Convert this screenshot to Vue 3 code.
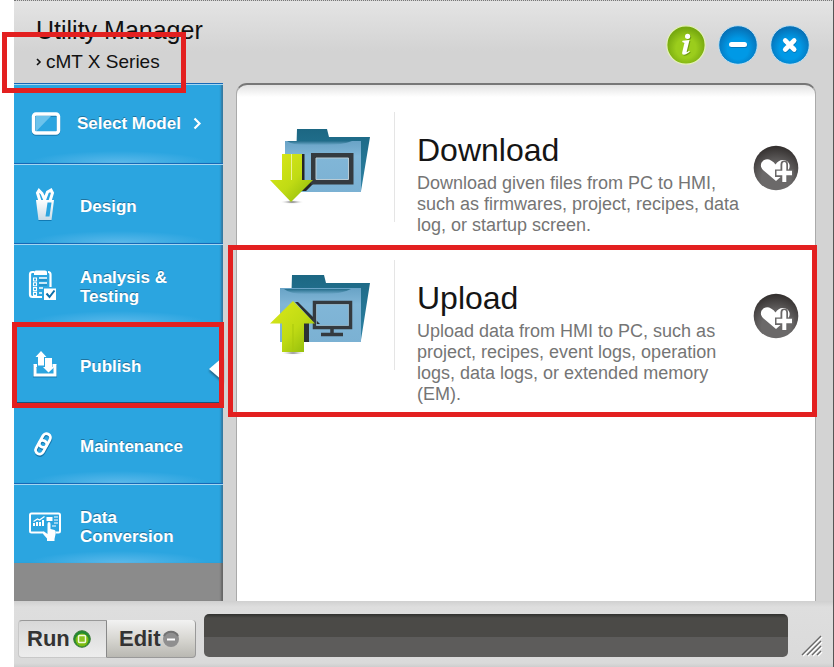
<script setup>
import { ref } from 'vue'

const active = ref('Publish')
const mode = ref('Run')

const items = [
  { label: 'Select Model', icon: 'model' },
  { label: 'Design', icon: 'design' },
  { label: 'Analysis & Testing', icon: 'analysis' },
  { label: 'Publish', icon: 'publish' },
  { label: 'Maintenance', icon: 'link' },
  { label: 'Data Conversion', icon: 'data' },
]

const cards = [
  {
    title: 'Download',
    text: 'Download given files from PC to HMI, such as firmwares, project, recipes, data log, or startup screen.',
  },
  {
    title: 'Upload',
    text: 'Upload data from HMI to PC, such as project, recipes, event logs, operation logs, data logs, or extended memory (EM).',
  },
]
</script>

<template>
  <div class="window">
    <header class="header">
      <div class="titles">
        <h1>Utility Manager</h1>
        <p class="series">
          <svg width="6" height="8" viewBox="0 0 6 8"><path d="M1 1l3 3-3 3" fill="none" stroke="#111" stroke-width="1.6" /></svg>
          <span>cMT X Series</span>
        </p>
        <span class="mark mark-series"></span>
      </div>
      <div class="controls">
        <button type="button" class="round" aria-label="Information">
          <svg width="40" height="40" viewBox="0 0 40 40">
            <defs>
              <radialGradient id="gGreen" cx=".5" cy=".58" r=".52">
                <stop offset=".5" stop-color="#9bcd1c" /><stop offset="1" stop-color="#76a80f" />
              </radialGradient>
            </defs>
            <circle cx="20" cy="20" r="19.2" fill="url(#gGreen)" stroke="#e4f2b8" stroke-width="1.2" />
            <g transform="translate(1 1)" fill="#56800a" opacity=".6">
              <circle cx="21.6" cy="11.3" r="2.6" />
              <path d="M16.500 15.800l7-.8-2.800 11.600c-.2 1 .6.8 2.600-.8l.5.8c-3 3.200-8.200 4.800-7.600 1l2.200-9.600-2.200-1z" />
            </g>
            <circle cx="21.6" cy="11.3" r="2.6" fill="#fff" />
            <path d="M16.500 15.800l7-.8-2.800 11.600c-.2 1 .6.8 2.600-.8l.5.8c-3 3.200-8.200 4.800-7.600 1l2.200-9.600-2.200-1z" fill="#fff" />
          </svg>
        </button>
        <button type="button" class="round" aria-label="Minimize">
          <svg width="40" height="40" viewBox="0 0 40 40">
            <defs>
              <radialGradient id="gBlue" cx=".5" cy=".6" r=".54">
                <stop offset=".5" stop-color="#0099e6" /><stop offset="1" stop-color="#0672b8" />
              </radialGradient>
            </defs>
            <circle cx="20" cy="20" r="19.3" fill="url(#gBlue)" stroke="#bfe0f2" stroke-width="1" />
            <rect x="11.5" y="18" width="18" height="5" rx="2.5" fill="#07558c" opacity=".5" />
            <rect x="11" y="17" width="18" height="5" rx="2.5" fill="#fff" />
          </svg>
        </button>
        <button type="button" class="round" aria-label="Close">
          <svg width="40" height="40" viewBox="0 0 40 40">
            <circle cx="20" cy="20" r="19.3" fill="url(#gBlue)" stroke="#bfe0f2" stroke-width="1" />
            <path d="M15.500 16.500l9 9m0-9l-9 9" stroke="#07558c" stroke-width="4.600" stroke-linecap="round" opacity=".5" />
            <path d="M15.200 15.500l9 9m0-9l-9 9" stroke="#fff" stroke-width="4.600" stroke-linecap="round" />
          </svg>
        </button>
      </div>
    </header>

    <div class="body">
      <nav class="sidebar">
        <button
          v-for="item in items"
          :key="item.label"
          type="button"
          class="nav-item"
          :class="{ active: active === item.label, first: item.icon === 'model' }"
          @click="active = item.label"
        >
          <span class="nav-icon">
            <svg v-if="item.icon === 'model'" width="30" height="26" viewBox="0 0 30 26">
              <rect x="2.5" y="4" width="25" height="19" rx="2.5" fill="#2ba5e0" stroke="#167ab0" stroke-width="3.5" />
              <path d="M5 20.500V5h15z" fill="#6cc3ec" />
              <rect x="2.5" y="3" width="25" height="19" rx="2.5" fill="none" stroke="#fff" stroke-width="3.5" />
            </svg>
            <svg v-else-if="item.icon === 'design'" width="30" height="36" viewBox="0 0 30 36">
              <defs><linearGradient id="cup" x1="0" y1="0" x2="0" y2="1"><stop offset="0" stop-color="#fff" /><stop offset="1" stop-color="#c9dbe6" /></linearGradient></defs>
              <path d="M10 14L7.500 6l1.500-2.500 3 3 3 7M14.500 13l3-8 3.500-2 1.500 3-2.500 8" fill="none" stroke="#fff" stroke-width="3" />
              <path d="M6 13h18l-2.500 20h-13z" fill="url(#cup)" />
              <path d="M17.500 15.500h4l-2 14h-4z" fill="#2ba5e0" />
              <path d="M8.500 33.500h13" stroke="#117ab4" />
            </svg>
            <svg v-else-if="item.icon === 'analysis'" class="shift" width="30" height="32" viewBox="0 0 30 32">
              <path d="M6 3H4.500Q2 3 2 5.500v20Q2 28 4.500 28H14M20 3q2.500 0 2.500 2.500V18" fill="none" stroke="#fff" stroke-width="2.200" />
              <path d="M6 6V3q0-1.500 2-1.500h9Q19 1.500 19 3v3z" fill="#fff" />
              <path d="M5.500 9h3v3h-3zM5.500 13.800h3v3h-3zM5.500 18.600h3v3h-3zM5.500 23.400h3v3h-3z" fill="none" stroke="#fff" stroke-width="1.100" />
              <path d="M11 9h8M11 14h8M11 19h4M11 24h3" stroke="#fff" stroke-width="1.300" />
              <path d="M11 11h8M11 16h8" stroke="#167ab0" stroke-width=".8" />
              <rect x="16" y="19.5" width="12" height="11.5" fill="#fff" />
              <path d="M18.500 24.500l3 3.500 5-6.500" fill="none" stroke="#0b6faa" stroke-width="2" />
            </svg>
            <svg v-else-if="item.icon === 'publish'" width="26" height="28" viewBox="0 0 26 28">
              <path d="M5 15.500H2.500V25h21v-9.500H21" fill="none" stroke="#157bb1" stroke-width="3" />
              <path d="M5 14.500H3v9.500h20v-9.500h-2.500" fill="none" stroke="#fff" stroke-width="3" />
              <path d="M9 0l5.500 6H12v8.500H6V6H3.500zM13 7h7v9h2.500L16.500 21.500 11 16h2z" fill="#fff" />
            </svg>
            <svg v-else-if="item.icon === 'link'" class="shift" width="26" height="28" viewBox="0 0 26 28">
              <g fill="none" transform="rotate(29 13 13)" stroke-width="2.8">
                <g stroke="#1477ad" transform="translate(1 1)">
                  <rect x="9" y="1.8" width="8" height="14.5" rx="4" />
                  <rect x="9" y="9.5" width="8" height="14.5" rx="4" />
                </g>
                <rect x="9" y="1.8" width="8" height="14.5" rx="4" stroke="#fff" />
                <rect x="9" y="9.5" width="8" height="14.5" rx="4" stroke="#fff" />
              </g>
            </svg>
            <svg v-else width="34" height="36" viewBox="0 -4 34 36">
              <path d="M16 21.500H3.500Q2 21.500 2 20V4q0-1.500 1.500-1.500h27Q32 2.500 32 4v16q0 1.500-1.500 1.500H28" fill="none" stroke="#fff" stroke-width="2" />
              <path d="M6 15v-3M9 15v-4M12 15v-4M15 15V9" stroke="#fff" stroke-width="2" />
              <path d="M5.500 10.500l4-2.500 2 1 5-3.500" fill="none" stroke="#fff" stroke-width="1.200" />
              <path d="M18.500 6h6v4h-6z" fill="#fff" />
              <path d="M26 6h4M26 9h4M26 12h4M24 15h4" stroke="#fff" stroke-width="1.200" />
              <path d="M19 30v-2.500l-3.500-4q-1.500-2.500.500-3l3.500 2.500V13q0-2 1.500-2t1.500 2v5l4 1q1.500.5 1.300 3L26.500 28v2z" fill="#fff" />
            </svg>
          </span>
          <span class="nav-label">{{ item.label }}</span>
          <svg v-if="item.icon === 'model'" class="chevron" width="9" height="13" viewBox="0 0 9 13"><path d="M1.500 1.500l5 5-5 5" fill="none" stroke="#fff" stroke-width="2.200" /></svg>
          <span v-if="active === item.label" class="pointer"></span>
          <span v-if="item.label === 'Publish'" class="mark mark-nav"></span>
        </button>
      </nav>

      <main class="panel">
        <article v-for="card in cards" :key="card.title" class="card">
          <div class="art">
            <svg v-if="card.title === 'Download'" width="100" height="84" viewBox="0 0 100 84">
              <defs>
                <linearGradient id="back" x1="0" y1="0" x2="0" y2="1"><stop offset="0" stop-color="#1c6783" /><stop offset="1" stop-color="#2e83a5" /></linearGradient>
                <linearGradient id="front" x1="0" y1="0" x2="0" y2="1"><stop offset="0" stop-color="#69a3c6" /><stop offset=".3" stop-color="#81b6d7" /><stop offset="1" stop-color="#7bb1d3" /></linearGradient>
                <linearGradient id="arrow" x1="0" y1="0" x2="1" y2="1"><stop offset="0" stop-color="#dce819" /><stop offset=".55" stop-color="#c0db14" /><stop offset="1" stop-color="#87b50a" /></linearGradient>
                <linearGradient id="fold" x1="0" y1="0" x2="0" y2="1"><stop offset="0" stop-color="#246d8a" /><stop offset="1" stop-color="#6ea8ca" /></linearGradient>
                <radialGradient id="ground"><stop offset="0" stop-color="#555" /><stop offset="1" stop-color="#fff" stop-opacity="0" /></radialGradient>
              </defs>
              <path d="M27 3h30l2 8h41l-9 54H25z" fill="url(#back)" />
              <path d="M15 15h76v51H15z" fill="url(#front)" />
              <path d="M17 15h65q-9 4-27 4H36q-14 0-19-4z" fill="url(#fold)" />
              <path d="M32 28h2.500v26H47L36 65h-6z" fill="#252525" />
              <path d="M43.500 29.500h37.500v26.500H43.500z" fill="none" stroke="#343a3f" stroke-width="5" />
              <path d="M46 32h32.500v21.500H46z" fill="none" stroke="#b9cbd4" />
              <ellipse cx="22" cy="76" rx="12" ry="2" fill="url(#ground)" />
              <path d="M12 28h20v26h11L21 76 0 54h12z" fill="url(#arrow)" />
              <path d="M21.500 28v26" stroke="#edf395" />
            </svg>
            <svg v-else width="100" height="84" viewBox="0 0 100 84">
              <path d="M22 1h32l2 8h44l-9 57H20z" fill="url(#back)" />
              <path d="M10 14h81v54H10z" fill="url(#front)" />
              <path d="M14 15h67q-9 5-27 5H35q-15 0-21-5z" fill="url(#fold)" />
              <path d="M25 28h3l22 22h-5zM34 49h5v19h-5z" fill="#2b3035" />
              <path d="M44.500 28.500h36v25h-36z" fill="none" stroke="#343a3f" stroke-width="3.500" />
              <path d="M46.500 30.500h32v21h-32z" fill="none" stroke="#9dbac9" stroke-width=".7" />
              <path d="M62 55v5M51 60.500h22" fill="none" stroke="#343a3f" stroke-width="3.500" />
              <ellipse cx="23" cy="79" rx="12" ry="1.8" fill="url(#ground)" />
              <path d="M23 27l22 22.500H34V78H12V49.500H0z" fill="url(#arrow)" />
              <path d="M23 50v28" stroke="#a9c70d" />
            </svg>
          </div>
          <div class="divider"></div>
          <div class="copy">
            <h2>{{ card.title }}</h2>
            <p>{{ card.text }}</p>
          </div>
          <button type="button" class="favorite" :aria-label="'Add ' + card.title + ' to favorites'">
            <svg width="46" height="46" viewBox="0 0 46 46">
              <defs>
                <radialGradient id="gDark" cx=".5" cy=".75" r=".72"><stop offset=".45" stop-color="#6b6969" /><stop offset="1" stop-color="#353130" /></radialGradient>
              </defs>
              <circle cx="23" cy="23" r="22.3" fill="url(#gDark)" />
              <path d="M23 36L10 25C4 18.500 12 11.500 18 15.500q3 1.500 4.500 4 3-4.500 7-4.500c6 0 9 5 6 10z" fill="#fff" />
              <path d="M28 38v-6h-6v-7.500h5.500V19.500q0-4 3.800-4t3.700 4v5h5.500V32H35v6z" fill="#696767" />
              <path d="M29.300 25.800V20q0-3 2-3t2 3v5.800H39v4.400h-5.700V37h-4v-6.800h-5.800v-4.400z" fill="#fff" />
            </svg>
          </button>
          <span v-if="card.title === 'Upload'" class="mark mark-card"></span>
        </article>
      </main>
    </div>

    <footer class="footer">
      <div class="modes">
        <button type="button" class="mode run" :aria-pressed="mode === 'Run'" @click="mode = 'Run'">
          <span>Run</span>
          <svg width="18" height="18" viewBox="0 0 18 18">
            <circle cx="9" cy="9" r="8.3" fill="#218a32" stroke="#397a34" />
            <circle cx="9" cy="10" r="6.5" fill="#7cbb12" />
            <rect x="5.5" y="5.5" width="7" height="7" rx="1" fill="#8bc220" stroke="#f2fae0" stroke-width="1.5" />
          </svg>
        </button>
        <button type="button" class="mode edit" :aria-pressed="mode === 'Edit'" @click="mode = 'Edit'">
          <span>Edit</span>
          <svg width="18" height="18" viewBox="0 0 18 18">
            <circle cx="9" cy="9" r="8" fill="#8f8f8f" />
            <path d="M2 6a8 8 0 0 1 14 0" fill="none" stroke="#737373" stroke-width="2" />
            <path d="M5 9.500h8" stroke="#fff" stroke-width="2" />
          </svg>
        </button>
      </div>
      <div class="status"></div>
      <svg class="grip" width="22" height="22" viewBox="0 0 22 22">
        <path d="M2 21L21 2M7 21L21 7M12 21l9-9M17 21l4-4" stroke="#fff" stroke-width="1.500" />
        <path d="M1 20L20 1M6 20L20 6M11 20l9-9M16 20l4-4" stroke="#686868" stroke-width="1.400" />
      </svg>
    </footer>
  </div>
</template>

<style>
body {
  margin: 0;
  background: #fff;
}
</style>

<style scoped>
* {
  box-sizing: border-box;
}
button {
  padding: 0;
  border: 0;
  background: none;
  font: inherit;
  color: inherit;
  cursor: pointer;
}
svg {
  display: block;
  flex: none;
}
h1, h2, p {
  margin: 0;
  font-weight: 400;
}
.window {
  display: flex;
  flex-direction: column;
  min-height: 100vh;
  margin-left: 14px;
  border-top: 1px dotted #777;
  border-right: 1px solid #555;
  background: #d3d3d3;
  font-family: "Liberation Sans", Arial, sans-serif;
}
.header {
  display: flex;
  justify-content: space-between;
  height: 82px;
  padding: 14px 23px 0 22px;
  background: linear-gradient(#e4e4e4, #d3d3d3 50px);
}
.titles {
  position: relative;
}
h1 {
  font-size: 25px;
  line-height: 30px;
  color: #111;
}
.series {
  display: flex;
  align-items: center;
  gap: 4px;
  font-size: 19px;
  line-height: 34px;
  color: #111;
}
.mark {
  position: absolute;
  border: 5px solid #e32020;
  pointer-events: none;
  z-index: 2;
}
.mark-series {
  left: -34px;
  top: 17px;
  width: 184px;
  height: 61px;
}
.controls {
  display: flex;
  gap: 12px;
  padding-top: 10px;
}
.round {
  width: 40px;
  height: 40px;
  border-radius: 50%;
}
.body {
  display: flex;
  flex: 1;
  gap: 13px;
  padding-right: 17px;
}
.sidebar {
  flex: none;
  width: 209px;
  background: #8b8b8b;
  box-shadow: inset -3px 0 2px -1px #666;
}
.nav-item {
  position: relative;
  display: flex;
  align-items: center;
  width: 100%;
  height: 80px;
  padding: 2px 0 0 14px;
  border-top: 1px solid #1769b8;
  background: radial-gradient(ellipse 90px 12px at 50% 100%, #5cb9ea, transparent), #2ba5e0;
  box-shadow: inset 0 1px #a5d6f0, inset -3px 0 2px -1px #3579a0;
  color: #fff;
  font-size: 17px;
  font-weight: 700;
  line-height: 19px;
  text-align: left;
  text-shadow: 0 -1px #21739e;
}
.nav-item.active {
  background: #2ba5e0;
  border-top-color: #2ba5e0;
  box-shadow: inset -3px 0 2px -1px #3579a0, inset 0 -1px #14547c;
}
.nav-item.first {
  padding-top: 0;
}
.nav-icon {
  display: flex;
  justify-content: center;
  width: 34px;
  margin-right: 18px;
}
.first .nav-icon {
  width: 36px;
  margin-right: 13px;
}
.shift {
  margin-right: 4px;
}
.nav-label {
  max-width: 110px;
  padding-top: 4px;
}
.first .nav-label {
  padding-top: 0;
}
.chevron {
  margin-left: 12px;
}
.pointer {
  position: absolute;
  right: 0;
  top: 33px;
  border: solid transparent;
  border-width: 12px 14px 12px 0;
  border-right-color: #fff;
  filter: drop-shadow(0 2px 1px #245e7e);
}
.mark-nav {
  left: -2px;
  top: -2px;
  width: 212px;
  height: 86px;
}
.panel {
  flex: 1;
  padding-top: 15px;
  border: solid #777;
  border-width: 2px 1px 0;
  border-left-color: #aaa;
  border-right-color: #aaa;
  border-radius: 11px 11px 0 0;
  background: linear-gradient(#e2e2e2, #fff 12px);
}
.card {
  position: relative;
  display: grid;
  grid-template-columns: 124px 1px 1fr 46px;
  align-items: start;
  padding: 12px 16px 12px 33px;
  min-height: 148px;
}
.art {
  padding-top: 14px;
}
.divider {
  height: 110px;
  background: #e5e5e5;
}
.copy {
  padding: 18px 10px 0 22px;
}
h2 {
  font-size: 32px;
  line-height: 40px;
  color: #151515;
}
.copy p {
  padding-top: 3px;
  color: #757575;
  font-size: 18px;
  line-height: 21px;
}
.favorite {
  width: 46px;
  height: 46px;
  margin-top: 33px;
  border-radius: 50%;
}
.mark-card {
  inset: -3px -2px 0 -9px;
}
.footer {
  display: flex;
  height: 66px;
  padding: 13px 10px 10px 4px;
  background: linear-gradient(#d0d0d0, #dedede 6px, #dadada 62px, #cecece);
}
.modes {
  display: flex;
  height: 38px;
  margin-top: 6px;
  border-radius: 4px;
}
.mode {
  display: flex;
  align-items: center;
  width: 89px;
  color: #333;
  font-size: 22px;
  font-weight: 700;
}
.run {
  gap: 3px;
  padding-left: 8px;
  border: 1px solid #c8c8c8;
  border-top-color: #999;
  border-right-color: #888;
  border-radius: 4px 0 0 4px;
  background: linear-gradient(#d8d8d8, #ededed);
}
.edit {
  gap: 1px;
  padding-left: 12px;
  border-right: 1px solid #999;
  border-bottom: 1px solid #999;
  border-radius: 0 4px 4px 0;
  background: linear-gradient(#f2f2f2, #d8d7d2 50%, #b9b8b2);
}
.status {
  flex: 1;
  margin: 0 13px 0 8px;
  border-radius: 5px;
  background: linear-gradient(#30302e, #4b4a47 4px, #4b4a47 23px, #5d5c5b 23px);
}
.grip {
  align-self: flex-end;
}
</style>
